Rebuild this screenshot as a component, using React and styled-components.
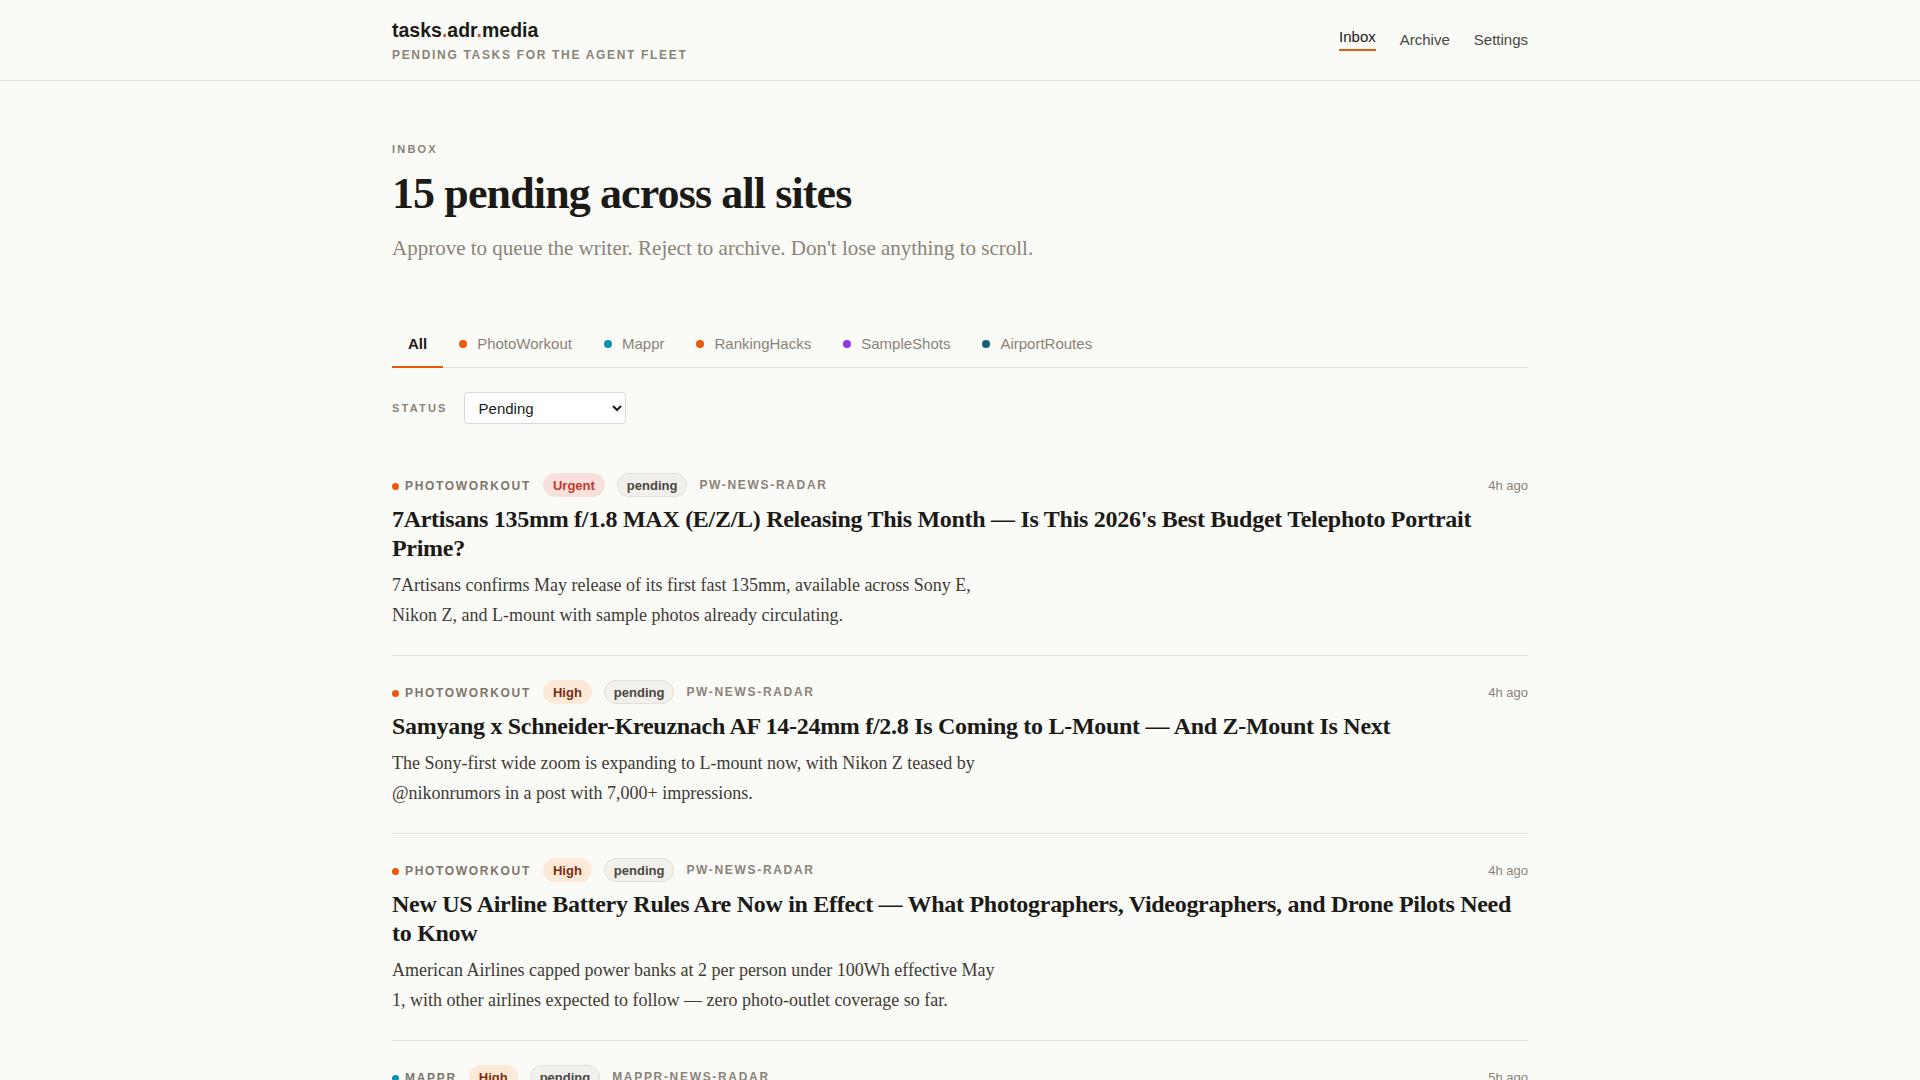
import React, { useState } from 'react';
import styled, { createGlobalStyle } from 'styled-components';

const GlobalStyle = createGlobalStyle`
  html, body {
    margin: 0;
    padding: 0;
    background: #fafaf7;
  }
  body {
    font-family: 'Liberation Sans', Arial, sans-serif;
    color: #1c1a17;
  }
  * { box-sizing: border-box; }
`;

const sans = `'Liberation Sans', Arial, sans-serif`;
const serif = `'Liberation Serif', 'Times New Roman', serif`;

const Header = styled.header`
  border-bottom: 1px solid #e6e2d8;
`;

const Inner = styled.div`
  max-width: 1200px;
  margin: 0 auto;
  padding: 0 32px;
`;

const HeaderRow = styled(Inner)`
  display: flex;
  justify-content: space-between;
  align-items: center;
  height: 80px;
`;

const Brand = styled.div`
  display: flex;
  flex-direction: column;
  gap: 7px;
  padding-top: 1px;
`;

const BrandName = styled.div`
  font-family: ${sans};
  font-weight: 700;
  font-size: 19.5px;
  line-height: 22px;
  color: #1c1a17;

  span { color: #e8590c; }
`;

const BrandTag = styled.div`
  font-family: ${sans};
  font-weight: 700;
  font-size: 12px;
  line-height: 14px;
  letter-spacing: 0.14em;
  text-transform: uppercase;
  color: #8a8378;
`;

const Nav = styled.nav`
  display: flex;
  align-items: center;
  gap: 24px;
`;

const NavLink = styled.a`
  font-family: ${sans};
  font-size: 15px;
  line-height: 18px;
  color: ${p => (p.$active ? '#1c1a17' : '#4a4640')};
  text-decoration: none;
  padding-bottom: ${p => (p.$active ? '3px' : '0')};
  border-bottom: ${p => (p.$active ? '2px solid #e8590c' : 'none')};
  margin-top: ${p => (p.$active ? '-2px' : '0')};
  cursor: pointer;
`;

const Main = styled(Inner)`
  padding-top: 60px;
  padding-bottom: 80px;
`;

const Eyebrow = styled.div`
  font-family: ${sans};
  font-weight: 700;
  font-size: 11px;
  line-height: 16px;
  letter-spacing: 0.2em;
  text-transform: uppercase;
  color: #8a8378;
`;

const Title = styled.h1`
  font-family: ${serif};
  font-weight: 700;
  font-size: 44px;
  line-height: 48px;
  letter-spacing: -0.02em;
  margin: 13px 0 0;
  color: #1c1a17;
`;

const Lede = styled.p`
  font-family: ${serif};
  font-size: 21px;
  line-height: 30px;
  color: #8a8378;
  margin: 15px 0 0;
`;

const Tabs = styled.div`
  display: flex;
  margin-top: 61px;
  border-bottom: 1px solid #e6e2d8;
`;

const Tab = styled.button`
  display: flex;
  align-items: center;
  gap: 10px;
  background: none;
  border: none;
  border-bottom: 2px solid ${p => (p.$active ? '#e8590c' : 'transparent')};
  margin-bottom: -1px;
  padding: 10px 16px 12px;
  font-family: ${sans};
  font-size: 15px;
  line-height: 20px;
  font-weight: ${p => (p.$active ? 700 : 400)};
  color: ${p => (p.$active ? '#1c1a17' : '#8a8378')};
  cursor: pointer;
`;

const Dot = styled.span`
  display: inline-block;
  width: ${p => p.$size || 7}px;
  height: ${p => p.$size || 7}px;
  border-radius: 50%;
  background: ${p => p.$color};
  flex-shrink: 0;
`;

const FilterRow = styled.div`
  display: flex;
  align-items: center;
  gap: 16px;
  margin-top: 24px;
`;

const FilterLabel = styled.label`
  font-family: ${sans};
  font-weight: 700;
  font-size: 11px;
  letter-spacing: 0.2em;
  text-transform: uppercase;
  color: #8a8378;
`;

const Select = styled.select`
  width: 162px;
  height: 32px;
  padding: 0 10px;
  font-family: ${sans};
  font-size: 15px;
  color: #1c1a17;
  background: #ffffff;
  border: 1px solid #ddd8ce;
  border-radius: 4px;
`;

const List = styled.div`
  margin-top: 49px;
`;

const Item = styled.article`
  padding: 24px 0 25px;
  border-bottom: 1px solid #e6e2d8;

  &:first-child { padding-top: 0; }
`;

const Meta = styled.div`
  display: flex;
  align-items: center;
  gap: 12px;
  height: 24px;
`;

const Site = styled.span`
  display: flex;
  align-items: center;
  gap: 6px;
  font-family: ${sans};
  font-weight: 700;
  font-size: 12px;
  letter-spacing: 0.14em;
  text-transform: uppercase;
  color: #7d766b;
  padding-top: 2px;
`;

const pillColors = {
  Urgent: { bg: '#f8e1dd', fg: '#c0392b', border: '#f8e1dd' },
  High: { bg: '#fde9d7', fg: '#7a2e0e', border: '#fde9d7' },
  pending: { bg: '#f2f0eb', fg: '#4a4640', border: '#e2ded6' },
};

const Pill = styled.span`
  display: inline-flex;
  align-items: center;
  height: 24px;
  padding: 0 9px;
  border-radius: 999px;
  font-family: ${sans};
  font-weight: 700;
  font-size: 13px;
  background: ${p => pillColors[p.$kind].bg};
  color: ${p => pillColors[p.$kind].fg};
  border: 1px solid ${p => pillColors[p.$kind].border};
`;

const Source = styled.span`
  font-family: ${sans};
  font-weight: 700;
  font-size: 12px;
  letter-spacing: 0.14em;
  text-transform: uppercase;
  color: #8a8378;
`;

const Time = styled.span`
  margin-left: auto;
  font-family: ${sans};
  font-size: 13px;
  color: #8a8378;
`;

const ItemTitle = styled.h2`
  font-family: ${serif};
  font-weight: 700;
  font-size: 24px;
  line-height: 29px;
  letter-spacing: -0.012em;
  margin: 8px 0 0;
  color: #1c1a17;
`;

const ItemDesc = styled.p`
  font-family: ${serif};
  font-size: 18px;
  line-height: 30px;
  color: #3f3b35;
  max-width: 612px;
  margin: 7px 0 0;
`;

const sites = [
  { name: 'PhotoWorkout', color: '#ea580c' },
  { name: 'Mappr', color: '#0891b2' },
  { name: 'RankingHacks', color: '#ea580c' },
  { name: 'SampleShots', color: '#9333ea' },
  { name: 'AirportRoutes', color: '#155e75' },
];

const siteColor = name => sites.find(s => s.name.toUpperCase() === name).color;

const tasks = [
  {
    site: 'PHOTOWORKOUT',
    priority: 'Urgent',
    source: 'pw-news-radar',
    time: '4h ago',
    title: "7Artisans 135mm f/1.8 MAX (E/Z/L) Releasing This Month — Is This 2026's Best Budget Telephoto Portrait Prime?",
    desc: '7Artisans confirms May release of its first fast 135mm, available across Sony E, Nikon Z, and L-mount with sample photos already circulating.',
  },
  {
    site: 'PHOTOWORKOUT',
    priority: 'High',
    source: 'pw-news-radar',
    time: '4h ago',
    title: 'Samyang x Schneider-Kreuznach AF 14-24mm f/2.8 Is Coming to L-Mount — And Z-Mount Is Next',
    desc: 'The Sony-first wide zoom is expanding to L-mount now, with Nikon Z teased by @nikonrumors in a post with 7,000+ impressions.',
  },
  {
    site: 'PHOTOWORKOUT',
    priority: 'High',
    source: 'pw-news-radar',
    time: '4h ago',
    title: 'New US Airline Battery Rules Are Now in Effect — What Photographers, Videographers, and Drone Pilots Need to Know',
    desc: 'American Airlines capped power banks at 2 per person under 100Wh effective May 1, with other airlines expected to follow — zero photo-outlet coverage so far.',
  },
  {
    site: 'MAPPR',
    priority: 'High',
    source: 'mappr-news-radar',
    time: '5h ago',
    title: 'New Transit Map Data Released for Major European Cities',
    desc: 'Updated open datasets cover rail and tram lines across twelve capitals, with route changes effective this summer.',
  },
];

export default function App() {
  const [tab, setTab] = useState('All');
  const [status, setStatus] = useState('pending');

  return (
    <>
      <GlobalStyle />
      <Header>
        <HeaderRow>
          <Brand>
            <BrandName>
              tasks<span>.</span>adr<span>.</span>media
            </BrandName>
            <BrandTag>Pending tasks for the agent fleet</BrandTag>
          </Brand>
          <Nav>
            <NavLink $active>Inbox</NavLink>
            <NavLink>Archive</NavLink>
            <NavLink>Settings</NavLink>
          </Nav>
        </HeaderRow>
      </Header>

      <Main>
        <Eyebrow>Inbox</Eyebrow>
        <Title>15 pending across all sites</Title>
        <Lede>Approve to queue the writer. Reject to archive. Don't lose anything to scroll.</Lede>

        <Tabs>
          <Tab $active={tab === 'All'} onClick={() => setTab('All')}>All</Tab>
          {sites.map(s => (
            <Tab key={s.name} $active={tab === s.name} onClick={() => setTab(s.name)}>
              <Dot $color={s.color} $size={8} />
              {s.name}
            </Tab>
          ))}
        </Tabs>

        <FilterRow>
          <FilterLabel>Status</FilterLabel>
          <Select value={status} onChange={e => setStatus(e.target.value)}>
            <option value="pending">Pending</option>
            <option value="approved">Approved</option>
            <option value="rejected">Rejected</option>
          </Select>
        </FilterRow>

        <List>
          {tasks.map((t, i) => (
            <Item key={i}>
              <Meta>
                <Site>
                  <Dot $color={siteColor(t.site)} />
                  {t.site}
                </Site>
                <Pill $kind={t.priority}>{t.priority}</Pill>
                <Pill $kind="pending">pending</Pill>
                <Source>{t.source}</Source>
                <Time>{t.time}</Time>
              </Meta>
              <ItemTitle>{t.title}</ItemTitle>
              <ItemDesc>{t.desc}</ItemDesc>
            </Item>
          ))}
        </List>
      </Main>
    </>
  );
}
